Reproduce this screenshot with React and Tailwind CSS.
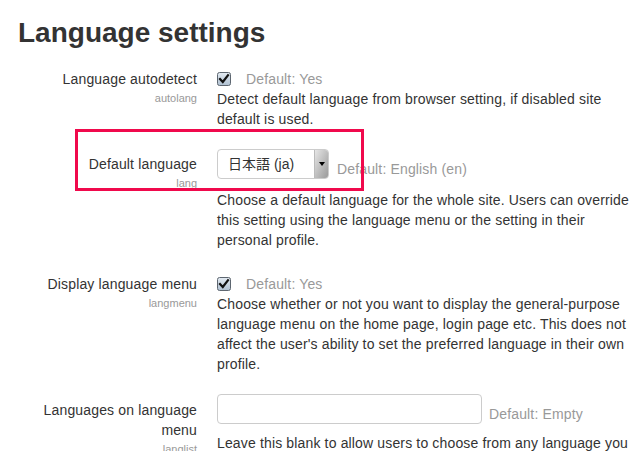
import React from "react";

function CheckBox() {
  return (
    <svg width="14" height="14" viewBox="0 0 14 14" className="shrink-0">
      <defs>
        <linearGradient id="cbfill" x1="0" y1="0" x2="0" y2="1">
          <stop offset="0" stopColor="#e4ebf2" />
          <stop offset="1" stopColor="#aebfd0" />
        </linearGradient>
      </defs>
      <rect x="0.5" y="0.5" width="13" height="13" rx="2" fill="url(#cbfill)" stroke="#5d6670" />
      <path d="M3 7 L5.8 10 L11 3.2" fill="none" stroke="#111" strokeWidth="2.2" strokeLinecap="square" />
    </svg>
  );
}

function Label({ title, name, pad = "" }) {
  return (
    <div className={`w-[179px] shrink-0 text-right ${pad}`}>
      <div className="text-[14px] leading-[20px] tracking-[0.15px] text-[#333]">{title}</div>
      <div className="text-[11px] leading-[18px] text-[#999]">{name}</div>
    </div>
  );
}

function Desc({ children, mt = "" }) {
  return (
    <div className={`text-[14px] leading-[20px] tracking-[0.15px] text-[#333] ${mt}`}>
      {children}
    </div>
  );
}

export default function App() {
  return (
    <div className="relative min-h-[451px] w-[640px] overflow-hidden bg-white pl-[18px] font-['Liberation_Sans','Noto_Sans_CJK_JP',Arial,sans-serif]">
      <h2 className="pt-[17px] text-[28px] font-bold leading-[32px] text-[#333]">
        Language settings
      </h2>

      {/* autolang */}
      <div className="mt-[20px] flex">
        <Label title="Language autodetect" name="autolang" />
        <div className="ml-[20px] w-[415px]">
          <div className="flex h-[20px] items-center">
            <CheckBox />
            <span className="ml-[15px] text-[14px] tracking-[0.15px] text-[#999]">Default: Yes</span>
          </div>
          <Desc>
            Detect default language from browser setting, if disabled site default is used.
          </Desc>
        </div>
      </div>

      {/* lang */}
      <div className="mt-[20px] flex">
        <Label title="Default language" name="lang" pad="pt-[5px]" />
        <div className="ml-[20px] w-[415px]">
          <div className="flex items-end">
            <div className="flex h-[30px] w-[112px] items-center overflow-hidden rounded-[4px] border border-[#ccc] bg-white">
              <span className="flex-1 pl-[10px] text-[14px] text-[#333]">日本語 (ja)</span>
              <div className="flex h-full w-[14px] items-center justify-center border-l border-[#bbb] bg-gradient-to-br from-[#e6e6e6] to-[#9a9a9a]">
                <div className="h-0 w-0 border-x-[3px] border-t-[4px] border-x-transparent border-t-black" />
              </div>
            </div>
            <span className="ml-[8px] text-[14px] leading-[20px] tracking-[0.15px] text-[#999]">
              Default: English (en)
            </span>
          </div>
          <Desc mt="mt-[11px]">
            Choose a default language for the whole site. Users can override this setting using the
            language menu or the setting in their personal profile.
          </Desc>
        </div>
      </div>

      {/* langmenu */}
      <div className="mt-[24px] flex">
        <Label title="Display language menu" name="langmenu" />
        <div className="ml-[20px] w-[415px]">
          <div className="flex h-[20px] items-center">
            <CheckBox />
            <span className="ml-[15px] text-[14px] tracking-[0.15px] text-[#999]">Default: Yes</span>
          </div>
          <Desc>
            Choose whether or not you want to display the general-purpose language menu on the home
            page, login page etc. This does not affect the user's ability to set the preferred
            language in their own profile.
          </Desc>
        </div>
      </div>

      {/* langlist */}
      <div className="mt-[20px] flex">
        <Label title="Languages on language menu" name="langlist" pad="pt-[6px]" />
        <div className="ml-[20px] w-[415px]">
          <div className="flex items-end">
            <input
              type="text"
              className="h-[30px] w-[265px] rounded-[4px] border border-[#ccc] bg-white px-[6px] text-[14px] outline-none"
            />
            <span className="ml-[7px] text-[14px] leading-[20px] tracking-[0.15px] text-[#999]">
              Default: Empty
            </span>
          </div>
          <Desc mt="mt-[9px]">
            Leave this blank to allow users to choose from any language you have installed.
          </Desc>
        </div>
      </div>

      {/* highlight annotation */}
      <div className="pointer-events-none absolute left-[75px] top-[129px] h-[62px] w-[289px] border-[3px] border-[#f0094c]" />
    </div>
  );
}
